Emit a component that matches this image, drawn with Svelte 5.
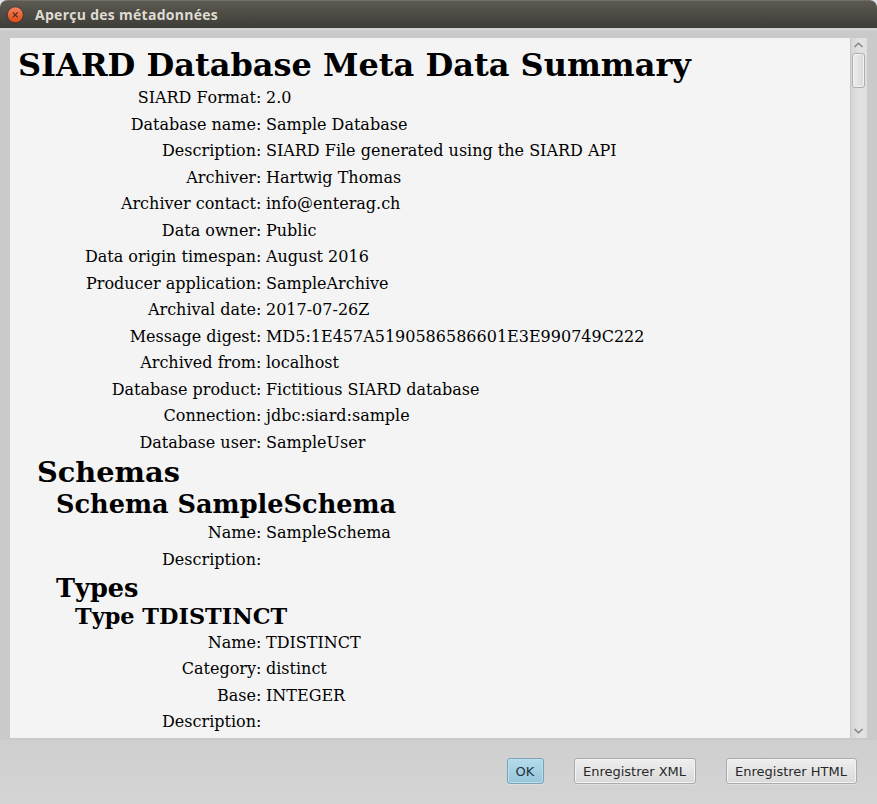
<script>
  const database = [
    ['SIARD Format:', '2.0'],
    ['Database name:', 'Sample Database'],
    ['Description:', 'SIARD File generated using the SIARD API'],
    ['Archiver:', 'Hartwig Thomas'],
    ['Archiver contact:', 'info@enterag.ch'],
    ['Data owner:', 'Public'],
    ['Data origin timespan:', 'August 2016'],
    ['Producer application:', 'SampleArchive'],
    ['Archival date:', '2017-07-26Z'],
    ['Message digest:', 'MD5:1E457A5190586586601E3E990749C222'],
    ['Archived from:', 'localhost'],
    ['Database product:', 'Fictitious SIARD database'],
    ['Connection:', 'jdbc:siard:sample'],
    ['Database user:', 'SampleUser']
  ];
  const schema = [['Name:', 'SampleSchema'], ['Description:', '']];
  const type = [['Name:', 'TDISTINCT'], ['Category:', 'distinct'], ['Base:', 'INTEGER'], ['Description:', '']];
</script>

{#snippet rows(items)}
  <dl>
    {#each items as [label, value]}
      <div class="row"><dt>{label}</dt><dd>{value}</dd></div>
    {/each}
  </dl>
{/snippet}

<div class="window">
  <header>
    <svg class="close" width="18" height="18" viewBox="0 0 18 18">
      <defs>
        <linearGradient id="orange" x1="0" y1="0" x2="0" y2="1">
          <stop offset="0" stop-color="#f5825c" /><stop offset="1" stop-color="#df4a16" />
        </linearGradient>
      </defs>
      <circle cx="9.3" cy="8.8" r="8" fill="url(#orange)" stroke="#35322d" stroke-width="0.8" />
      <path d="M6.8 6.3l5 5M11.8 6.3l-5 5" stroke="#4b2c20" stroke-width="1.2" />
    </svg>
    <span class="caption">Aperçu des métadonnées</span>
  </header>
  <main>
    <article>
      <h1>SIARD Database Meta Data Summary</h1>
      {@render rows(database)}
      <h2>Schemas</h2>
      <h3 class="schema">Schema SampleSchema</h3>
      {@render rows(schema)}
      <h3>Types</h3>
      <h4>Type TDISTINCT</h4>
      {@render rows(type)}
    </article>
    <div class="scrollbar">
      <svg width="17" height="14" viewBox="0 0 17 14"><path d="M4.5 9L8.5 5.2L12.5 9" fill="none" stroke="#858585" stroke-width="1.5" /></svg>
      <div class="thumb"></div>
      <span class="track"></span>
      <svg width="17" height="14" viewBox="0 0 17 14"><path d="M4.5 5L8.5 8.8L12.5 5" fill="none" stroke="#858585" stroke-width="1.5" /></svg>
    </div>
  </main>
  <footer>
    <button class="ok">OK</button>
    <button class="xml">Enregistrer XML</button>
    <button class="html">Enregistrer HTML</button>
  </footer>
</div>

<style>
  :global(body) { margin: 0; background: #dfe3e8; }
  .window {
    width: 877px; height: 804px; box-sizing: border-box; overflow: hidden;
    display: flex; flex-direction: column; background: #cacaca;
    border-radius: 7px 7px 0 0;
  }
  header {
    height: 28px; flex: none; box-sizing: border-box; display: flex; align-items: center;
    padding-left: 6px; background: linear-gradient(#5c5a51, #3d3c37);
    border-top: 1px solid #706e64; border-radius: 7px 7px 0 0;
  }
  .close { flex: none; }
  .caption {
    margin-left: 11px; color: #dfdbd2; font: bold 14px/20px "Open Sans", "Noto Sans", sans-serif;
    white-space: nowrap; letter-spacing: 0.28px;
  }
  main {
    height: 700px; flex: none; display: flex; padding: 7px 10px 0;
    border-top: 3px solid #d2d2d2;
  }
  article {
    width: 840px; height: 700px; box-sizing: border-box; padding: 8px 0 0 8px; overflow: hidden;
    background: #f4f4f4; color: #000; font-family: "DejaVu Serif", serif; font-size: 16px;
    white-space: nowrap; font-kerning: none;
  }
  h1, h2, h3, h4 { margin: 0; font-weight: bold; }
  h1 { font-size: 32px; line-height: 38px; margin-bottom: 1px; }
  h2 { font-size: 28.8px; line-height: 33px; padding-left: 19px; }
  h3 { font-size: 25.6px; line-height: 30px; padding-left: 38px; }
  .schema { margin-bottom: 1px; }
  h4 { font-size: 22.4px; line-height: 26.5px; padding-left: 57px; }
  dl { margin: 0; }
  .row { display: flex; height: 26.5px; line-height: 26.5px; }
  dt { width: 243.4px; margin-right: 4.6px; text-align: right; }
  dd { margin: 0; }
  .scrollbar {
    width: 17px; height: 700px; box-sizing: border-box; display: flex; flex-direction: column;
    border-left: 1px solid #c6c6c6; background: linear-gradient(90deg, #d6d6d6, #e3e3e3 60%, #dedede);
  }
  .scrollbar svg { flex: none; margin-left: -1px; }
  .thumb {
    flex: none; width: 13px; height: 35px; margin: 1px 0 0 1px; box-sizing: border-box;
    border: 1px solid #adadad; border-radius: 3px;
    background: linear-gradient(90deg, #ededed, #d9d9d9); box-shadow: inset 0 0 0 1px #f3f3f3;
  }
  .track { flex: 1; }
  footer {
    margin-top: 2px; flex: 1; display: flex; align-items: flex-start; justify-content: flex-end;
    gap: 30px; padding: 18px 20px 0 0; background: linear-gradient(#cfcfcf, #d4d4d4);
  }
  button {
    height: 26px; box-sizing: border-box; padding: 1px 1px 0 0; border: 1px solid #aaa; border-radius: 3px;
    background: linear-gradient(#efefef, #d9d9d9); color: #282828;
    box-shadow: inset 0 0 0 1px #f3f3f3, 0 1px 0 #dedede;
    font: 13px/23px "DejaVu Sans", sans-serif; white-space: nowrap;
  }
  .ok {
    width: 37px; color: #1e3441; border-color: #7ba3b5;
    background: linear-gradient(#b3dbeb, #98c5d9); box-shadow: inset 0 0 0 1px #b9deec, 0 1px 0 #dedede;
  }
  .xml { width: 122px; }
  .html { width: 131px; }
</style>
